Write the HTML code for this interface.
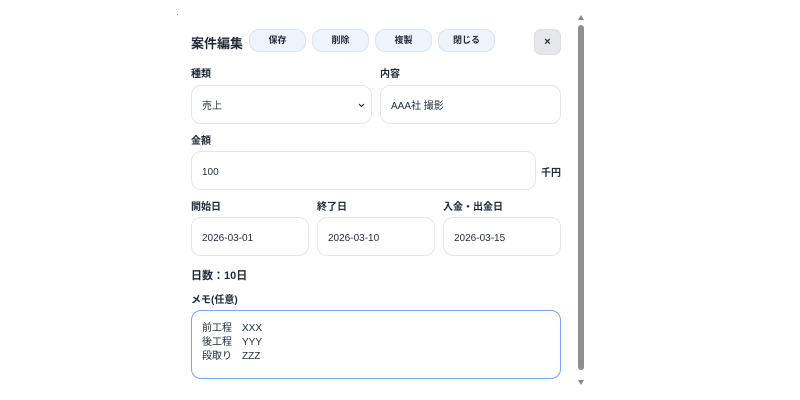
<!DOCTYPE html>
<html><head><meta charset="utf-8"><style>
*{box-sizing:border-box;margin:0;padding:0}
body{width:800px;height:400px;background:#fff;position:relative;overflow:hidden;font-family:"Liberation Sans","Noto Sans CJK JP",sans-serif;color:#1f2937}
.a{position:absolute}
.t{font-size:13px;font-weight:bold;left:191px;top:33px}
.btn{top:29px;height:23px;width:57px;border:1px solid #dbe4f0;background:#eef4fc;border-radius:10px;font-size:9px;font-weight:bold;text-align:center;line-height:21px}
.x{left:534px;top:29px;width:27px;height:26px;background:#e5e7eb;border:1px solid #dcdee2;border-radius:7px;font-size:11px;font-weight:bold;text-align:center;line-height:24px}
.l{font-size:10px;font-weight:bold}
.in{border:1px solid #e3e6ea;border-radius:10px;height:39px;font-size:10px;padding-left:10px;line-height:41px}
.sb{left:578px;top:25px;width:6px;height:345px;background:#8f8f8f;border-radius:3px}
</style></head><body>
<div class="a" style="left:177px;top:14px;width:1px;height:1px;background:#888"></div>
<div class="a t">案件編集</div>
<div class="a btn" style="left:249px">保存</div>
<div class="a btn" style="left:312px">削除</div>
<div class="a btn" style="left:375px">複製</div>
<div class="a btn" style="left:438px">閉じる</div>
<div class="a x">×</div>
<div class="a l" style="left:191px;top:65px">種類</div>
<div class="a l" style="left:380px;top:65px">内容</div>
<div class="a in" style="left:191px;top:85px;width:181px">売上<svg style="position:absolute;right:6px;top:17px" width="7" height="5" viewBox="0 0 7 5"><path d="M1 1L3.5 3.5L6 1" stroke="#333" stroke-width="1.2" fill="none"/></svg></div>
<div class="a in" style="left:380px;top:85px;width:181px">AAA社 撮影</div>
<div class="a l" style="left:191px;top:132px">金額</div>
<div class="a in" style="left:191px;top:151px;width:345px">100</div>
<div class="a l" style="left:541px;top:164px">千円</div>
<div class="a l" style="left:191px;top:198px">開始日</div>
<div class="a l" style="left:317px;top:198px">終了日</div>
<div class="a l" style="left:443px;top:198px">入金・出金日</div>
<div class="a in" style="left:191px;top:217px;width:118px">2026-03-01</div>
<div class="a in" style="left:317px;top:217px;width:118px">2026-03-10</div>
<div class="a in" style="left:443px;top:217px;width:118px">2026-03-15</div>
<div class="a" style="left:191px;top:267px;font-size:11px;font-weight:bold">日数：10日</div>
<div class="a l" style="left:191px;top:291px">メモ(任意)</div>
<div class="a" style="left:191px;top:310px;width:370px;height:69px;border:1.5px solid #7aa2f7;border-radius:10px;font-size:10px;line-height:14px;padding:11px 0 0 10px">前工程　XXX<br>後工程　YYY<br>段取り　ZZZ</div>
<div class="a" style="left:578px;top:15px;width:0;height:0;border-left:3px solid transparent;border-right:3px solid transparent;border-bottom:5px solid #888"></div>
<div class="a sb"></div>
<div class="a" style="left:578px;top:380px;width:0;height:0;border-left:3px solid transparent;border-right:3px solid transparent;border-top:5px solid #888"></div>
</body></html>
